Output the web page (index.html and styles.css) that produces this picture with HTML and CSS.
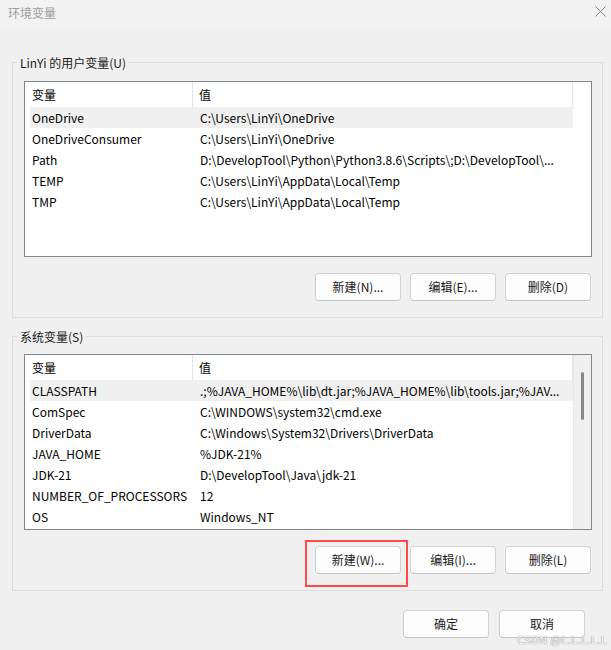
FILE: index.html
```html
<!DOCTYPE html>
<html lang="zh-CN">
<head>
<meta charset="utf-8">
<title>环境变量</title>
<link rel="stylesheet" href="styles.css">
</head>
<body>
<div class="window">
  <div class="titlebar">
    <span class="title">环境变量</span>
    <svg class="close" width="11" height="11" viewBox="0 0 11 11"><path d="M0.5 0.5 L10.5 10.5 M10.5 0.5 L0.5 10.5" stroke="#8a8a8a" stroke-width="1" fill="none"/></svg>
  </div>

  <div class="body">
    <section class="group g1">
      <div class="group-title">LinYi 的用户变量(U)</div>
      <div class="list">
        <div class="table">
          <div class="head"><div class="c1">变量</div><div class="c2">值</div></div>
          <div class="row sel"><div class="c1">OneDrive</div><div class="c2">C:\Users\LinYi\OneDrive</div></div>
          <div class="row"><div class="c1">OneDriveConsumer</div><div class="c2">C:\Users\LinYi\OneDrive</div></div>
          <div class="row"><div class="c1">Path</div><div class="c2">D:\DevelopTool\Python\Python3.8.6\Scripts\;D:\DevelopTool\...</div></div>
          <div class="row"><div class="c1">TEMP</div><div class="c2">C:\Users\LinYi\AppData\Local\Temp</div></div>
          <div class="row"><div class="c1">TMP</div><div class="c2">C:\Users\LinYi\AppData\Local\Temp</div></div>
        </div>
        <div class="track blank"></div>
      </div>
      <div class="buttons">
        <button class="btn">新建(N)...</button>
        <button class="btn">编辑(E)...</button>
        <button class="btn">删除(D)</button>
      </div>
    </section>

    <section class="group g2">
      <div class="group-title">系统变量(S)</div>
      <div class="list">
        <div class="table">
          <div class="head"><div class="c1">变量</div><div class="c2">值</div></div>
          <div class="row sel"><div class="c1">CLASSPATH</div><div class="c2">.;%JAVA_HOME%\lib\dt.jar;%JAVA_HOME%\lib\tools.jar;%JAV...</div></div>
          <div class="row"><div class="c1">ComSpec</div><div class="c2">C:\WINDOWS\system32\cmd.exe</div></div>
          <div class="row"><div class="c1">DriverData</div><div class="c2">C:\Windows\System32\Drivers\DriverData</div></div>
          <div class="row"><div class="c1">JAVA_HOME</div><div class="c2">%JDK-21%</div></div>
          <div class="row"><div class="c1">JDK-21</div><div class="c2">D:\DevelopTool\Java\jdk-21</div></div>
          <div class="row"><div class="c1">NUMBER_OF_PROCESSORS</div><div class="c2">12</div></div>
          <div class="row"><div class="c1">OS</div><div class="c2">Windows_NT</div></div>
        </div>
        <div class="track"><div class="thumb"></div></div>
      </div>
      <div class="buttons">
        <div class="hl-wrap">
          <button class="btn">新建(W)...</button>
          <span class="highlight"></span>
        </div>
        <button class="btn">编辑(I)...</button>
        <button class="btn">删除(L)</button>
      </div>
    </section>

    <div class="footer">
      <button class="btn">确定</button>
      <button class="btn">取消</button>
    </div>
  </div>
  <div class="watermark">CSDN @L.L.L.L.L</div>
</div>
</body>
</html>
```

FILE: styles.css
```css
* { box-sizing: border-box; }

html, body {
  margin: 0;
  padding: 0;
}

body {
  width: 611px;
  height: 650px;
  background: #f0f0f0;
  font-family: "Noto Sans CJK SC", "Noto Sans", sans-serif;
  font-size: 12px;
  color: #000;
  overflow: hidden;
}

.window {
  position: relative;
  width: 611px;
  height: 650px;
}

.titlebar {
  height: 27px;
  display: flex;
  align-items: center;
  justify-content: space-between;
  padding: 0 5px 3px 8px;
  background: #f2f2f2;
}

.title {
  color: #9d9d9d;
  line-height: 17px;
}

.close {
  display: block;
  margin-top: -1px;
}

.body {
  padding: 35px 8px 0 12px;
}

.group {
  border: 1px solid #dcdcdc;
  padding: 0 10px 16px 11px;
}

.group-title {
  display: block;
  width: fit-content;
  height: 17px;
  margin: -9px 0 0 -6px;
  padding: 0 2px;
  background: #f0f0f0;
  line-height: 17px;
  color: #1a1a1a;
}

.g1 .list { margin-top: 10px; }
.g2 { margin-top: 18px; }
.g2 .list { margin-top: 9px; }

.list {
  display: flex;
  height: 176px;
  border: 1px solid #828790;
  background: #fff;
}

.table {
  width: 548px;
  flex: none;
}

.head {
  display: flex;
  height: 25px;
  align-items: center;
  border-right: 1px solid #e5e5e5;
}

.head .c1 {
  width: 168px;
  padding-left: 7px;
  height: 100%;
  display: flex;
  align-items: center;
  border-right: 1px solid #e5e5e5;
}

.head .c2 {
  padding-left: 6px;
}

.row {
  display: flex;
  height: 21px;
  align-items: center;
  margin-left: 5px;
  white-space: nowrap;
}

.row.sel {
  background: #f0f0f0;
}

.row .c1 {
  width: 163px;
  flex: none;
  padding-left: 2px;
  overflow: hidden;
}

.row .c2 {
  flex: 1;
  min-width: 0;
  padding-left: 7px;
  overflow: hidden;
}

.track {
  flex: 1;
  background: #f0f0f0;
  border-left: 1px solid #e8e8e8;
  padding: 17px 0 0 7px;
}

.track.blank {
  background: #fff;
  border-left: none;
}

.thumb {
  width: 3px;
  height: 48px;
  background: #8a8a8a;
  border-radius: 2px;
}

.buttons {
  display: flex;
  justify-content: flex-end;
  gap: 9px;
  margin-top: 16px;
  padding-right: 1px;
}

.btn {
  width: 86px;
  height: 28px;
  padding: 0;
  border: 1px solid #d2d2d2;
  border-bottom-color: #c4c4c4;
  border-radius: 4px;
  background: #fdfdfd;
  font-family: inherit;
  font-size: 12px;
  color: #1a1a1a;
  line-height: 26px;
}

.hl-wrap {
  position: relative;
  display: flex;
}

.highlight {
  position: absolute;
  left: -10px;
  top: -6px;
  width: 103px;
  height: 47px;
  border: 2px solid #ff4a4a;
}

.footer {
  display: flex;
  justify-content: flex-end;
  gap: 10px;
  margin-top: 19px;
  padding-right: 18px;
}

.watermark {
  position: absolute;
  right: 4px;
  bottom: 5px;
  font-size: 11px;
  line-height: 11px;
  color: #fff;
  letter-spacing: 0.4px;
  text-shadow: 0 0 1px #8a8a8a, 0 0 1px #8a8a8a;
}
```
